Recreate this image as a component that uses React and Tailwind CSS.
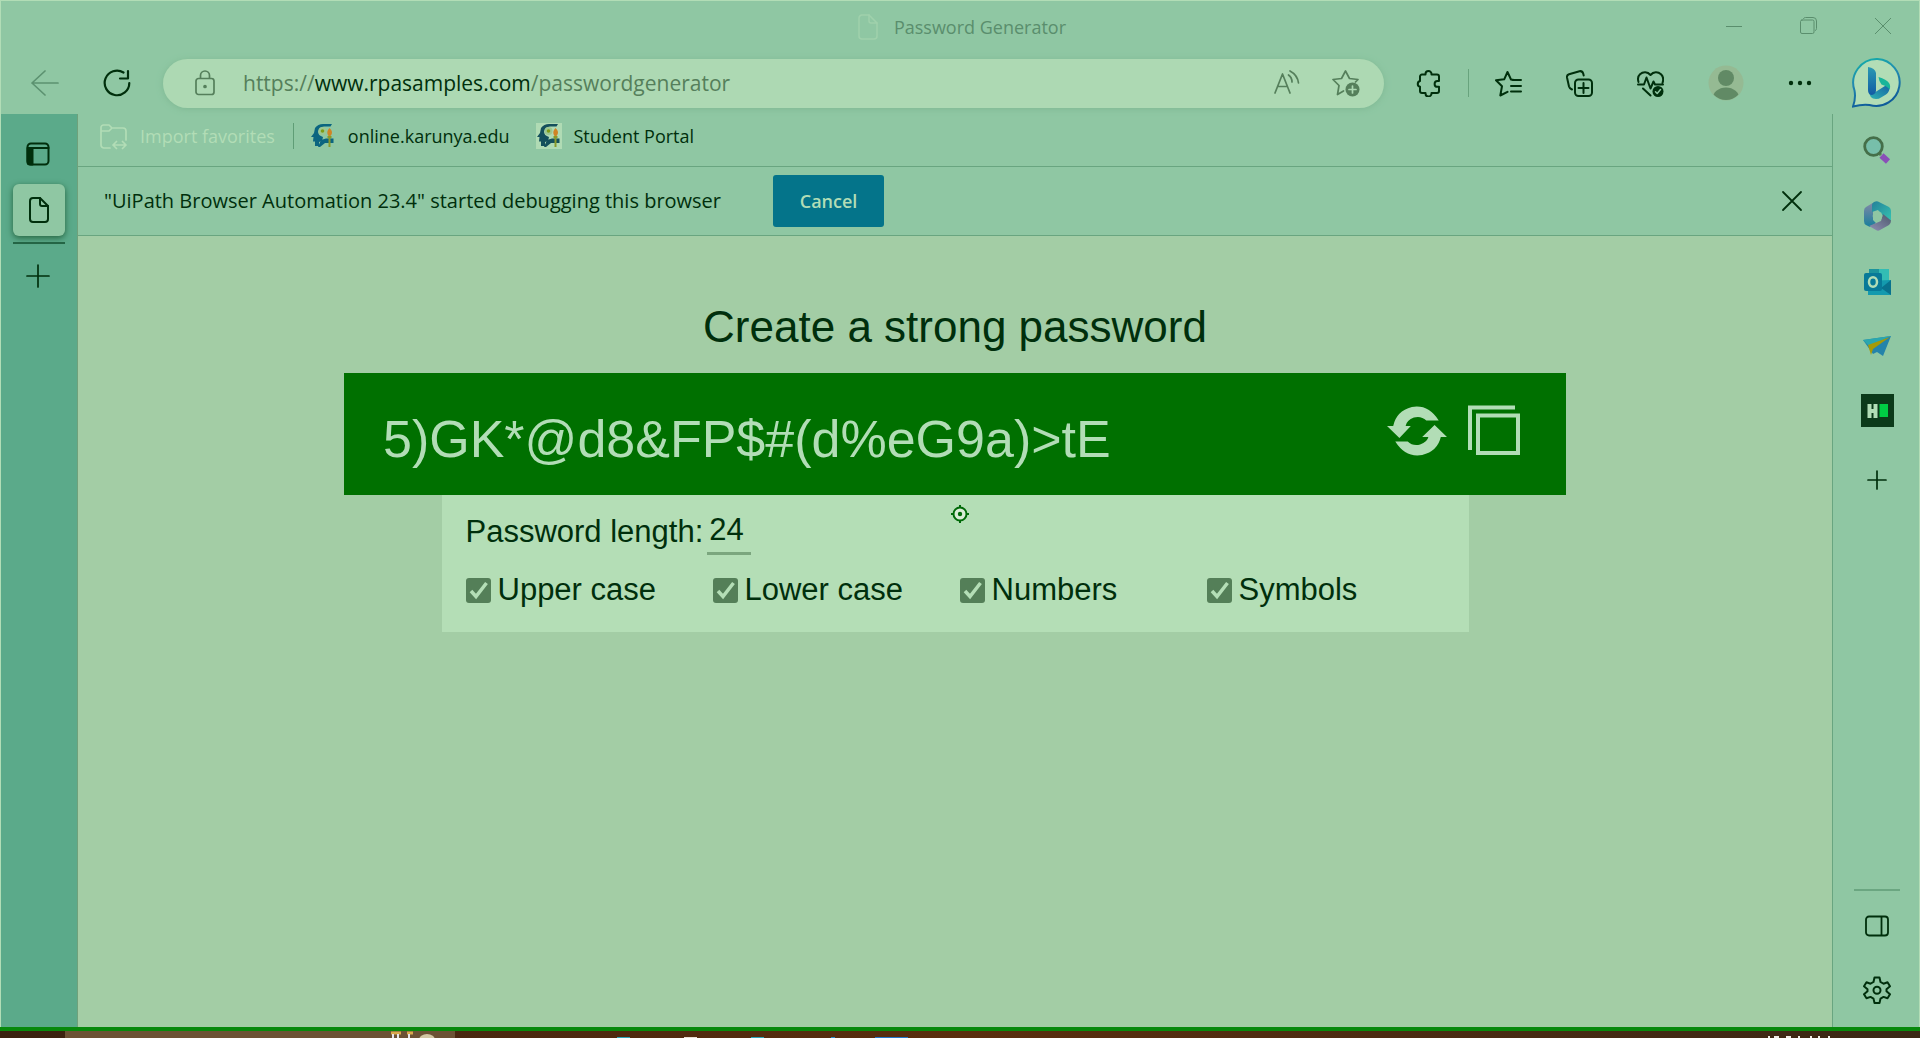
const ui = "font-['Open_Sans','Noto_Sans',sans-serif]";

function Svg({ className, vb = "0 0 24 24", children, sw = 1.5 }) {
  return (
    <svg className={className} viewBox={vb} fill="none" stroke="currentColor" strokeWidth={sw} strokeLinecap="round" strokeLinejoin="round" aria-hidden="true">
      {children}
    </svg>
  );
}

function PageIcon({ className, sw = 2 }) {
  return (
    <Svg className={className} vb="0 0 20 26" sw={sw}>
      <path d="M4 1h7l8 8v13a3 3 0 0 1-3 3H4a3 3 0 0 1-3-3V4a3 3 0 0 1 3-3z" />
      <path d="M11 1v6a2 2 0 0 0 2 2h6" />
    </Svg>
  );
}

function TitleBar() {
  return (
    <header className="flex h-[52px] items-start text-[#5a8e6d]">
      <div className="w-[210px]" />
      <div className="flex flex-1 items-center justify-center gap-4 pt-3 pl-[14px]">
        <PageIcon className="h-[26px] w-5 text-[#a0d1ac]" sw={1.5} />
        <h1 className="text-[18px] leading-7">Password Generator</h1>
      </div>
      <div className="flex w-[220px] justify-end gap-[58px] pt-4 pr-7">
        <button aria-label="Minimize"><Svg className="size-4" vb="0 0 16 16" sw={1}><path d="M0 8.5h16" /></Svg></button>
        <button aria-label="Restore"><Svg className="size-[17px]" vb="0 0 17 17" sw={1}><rect x=".5" y="3" width="13.5" height="13.5" rx="1.5" /><path d="M3.5 1.5Q4 .5 5.500 .5H13a3.500 3.500 0 0 1 3.500 3.500v7.500q0 1.500-1 2" /></Svg></button>
        <button aria-label="Close"><Svg className="size-4" vb="0 0 16 16" sw={1}><path d="M0 0l16 16M16 0L0 16" /></Svg></button>
      </div>
    </header>
  );
}

function BingLogo() {
  return (
    <svg className="size-[50px]" viewBox="0 0 50 50" aria-hidden="true">
      <defs>
        <linearGradient id="bo" x1="0" y1="0" x2=".3" y2="1"><stop offset="0" stopColor="#12b0a8" /><stop offset=".5" stopColor="#2389b0" /><stop offset="1" stopColor="#0f5c9a" /></linearGradient>
        <linearGradient id="bs" x1="0" y1="0" x2="0" y2="1"><stop offset="0" stopColor="#2b9ab2" /><stop offset="1" stopColor="#125ba4" /></linearGradient>
        <linearGradient id="bb" x1="0" y1="1" x2="1" y2="0"><stop offset="0" stopColor="#2cb3b2" /><stop offset="1" stopColor="#1763a4" /></linearGradient>
      </defs>
      <path d="M25.500 1a23.500 23.500 0 1 1-8 46q-7-1-16.500 1.500 3-8 1.500-16A23.800 23.800 0 0 1 25.500 1z" fill="#b2ddb6" stroke="url(#bo)" strokeWidth="2" />
      <path d="M17 32q0 9 7 9 3 0 5-1.500l5-3q4-3 3.500-8l-3-1.500-11 7z" fill="url(#bb)" />
      <path d="M26.500 19q8 2.500 10.500 6 2 3 .5 6.500-2-3-8-5-2.500-3-3-7.500z" fill="#18b59a" />
      <path d="M16 9q7 1 8 6v18q-1 4-5 4-3-1-3-5z" fill="url(#bs)" />
    </svg>
  );
}

const toolbarIcons = {
  puzzle: (
    <Svg className="h-[27px] w-6" vb="0 0 24 27" sw={2}>
      <path d="M6 4.500h3.500V4a3 3 0 0 1 6 0v.5H21a2 2 0 0 1 2 2V11h-1.500a2.900 2.900 0 0 0 0 5.800H23v4.200a2 2 0 0 1-2 2h-5.500v.5a3 3 0 0 1-6 0V23H6a2 2 0 0 1-2-2v-4.200a3 3 0 0 1 0-5.800V6.500a2 2 0 0 1 2-2z" />
    </Svg>
  ),
  favorites: (
    <Svg className="size-[27px]" vb="0 0 27 27" sw={2}>
      <path d="M16 9.500L12.500 2 9.200 9.300 1 10.300l6 6L5.300 25.500 12.500 21.800M16 9.500l2 .3M17 10h9M16 16h10M16 21.500h10" />
    </Svg>
  ),
  collections: (
    <Svg className="size-[27px]" vb="0 0 27 27" sw={2}>
      <rect x="9" y="9.500" width="17" height="16.500" rx="3.500" />
      <path d="M17.500 13v10M12.500 18h10M6 19.500q-2.500-1-3-3L1 7.500Q.6 5 3 4.200L13.500 1.200q2.800-.5 3.700 2.300l.5 2" />
    </Svg>
  ),
  health: (
    <Svg className="size-[27px]" vb="0 0 27 27" sw={2}>
      <path d="M1.500 12Q0 7 3 4.300C6 1.500 10.500 1.500 13.500 5c3-3.500 7.500-3.500 10.500-.7 3 2.700 2.500 5.700 1.500 8.700M1 14.500h6l2.500-7 4 11 3-7 1.500 3h8M6 18.500l7.500 7" />
      <circle cx="21" cy="21.500" r="5.500" fill="currentColor" stroke="none" />
      <path d="M18.500 21.800l1.700 1.700 3.300-4" stroke="#8fc7a3" strokeWidth="1.500" />
    </Svg>
  ),
};

function Toolbar() {
  return (
    <nav aria-label="Browser" className="mb-px flex h-[60px] items-center pl-[30px] text-[#002f0c]">
      <button aria-label="Back" className="text-[#5c9270]"><Svg className="size-7" vb="0 0 28 28" sw={1.700}><path d="M27 14H1M14 2L1 14l13 12" /></Svg></button>
      <button aria-label="Refresh" className="ml-11"><Svg className="size-7" vb="0 0 28 28" sw={2.200}><path d="M20.500 3.500A12.300 12.300 0 1 0 26.300 14M25 2v7.500h-8" /></Svg></button>
      <form className="ml-8 flex h-[49px] flex-1 items-center rounded-full bg-[#add9b3] pr-6 pl-8 text-[#557f5b] shadow-[0_1px_6px_#7fb893]" onSubmit={(e) => e.preventDefault()}>
        <Svg className="h-[26px] w-5 shrink-0" vb="0 0 20 26" sw={1.700}>
          <rect x="1" y="8.500" width="18" height="16" rx="2.500" /><path d="M5.500 8V5.500a4.500 4.500 0 0 1 9 0V8" /><circle cx="10" cy="16.500" r="1" fill="currentColor" />
        </Svg>
        <div role="textbox" aria-label="Address" contentEditable suppressContentEditableWarning className="ml-7 flex-1 text-[21px] leading-8 whitespace-nowrap outline-none">
          https://<span className="text-[#002f0c]">www.rpasamples.com</span>/passwordgenerator
        </div>
        <button aria-label="Read aloud" type="button"><Svg className="size-[26px]" vb="0 0 26 26" sw={1.700}><path d="M1 23L8.500 4l7.500 19M3.800 16.500h9.500M14.500 5q3.500 2.500 3.500 7M16 1q7.500 4 8.500 12" /></Svg></button>
        <button aria-label="Add to favorites" type="button" className="ml-8">
          <Svg className="size-7" vb="0 0 28 28" sw={1.700}>
            <path d="M11.500 22L5.500 25.500 7 16.500 1 10.500l8.500-1L13.500 2l4 7.500 8.500 1-2.500 2.500" />
            <circle cx="20.500" cy="20.500" r="7" fill="currentColor" stroke="none" /><path d="M20.500 17v7M17 20.500h7" stroke="#add9b3" />
          </Svg>
        </button>
      </form>
      <button aria-label="Extensions" className="ml-8">{toolbarIcons.puzzle}</button>
      <span className="ml-7 h-7 w-px bg-[#68a37d]" />
      <button aria-label="Favorites" className="ml-[26px]">{toolbarIcons.favorites}</button>
      <button aria-label="Collections" className="ml-11">{toolbarIcons.collections}</button>
      <button aria-label="Browser essentials" className="ml-11">{toolbarIcons.health}</button>
      <button aria-label="Profile" className="ml-11">
        <svg className="size-9" viewBox="0 0 36 36" aria-hidden="true">
          <clipPath id="av"><circle cx="18" cy="18" r="17" /></clipPath>
          <circle cx="18" cy="18" r="17.500" fill="#95ba93" />
          <g clipPath="url(#av)" fill="#618a65"><circle cx="18" cy="13" r="8" /><ellipse cx="18" cy="34" rx="13.500" ry="11.500" /></g>
        </svg>
      </button>
      <button aria-label="Settings and more" className="ml-11"><svg className="h-6 w-6" viewBox="0 0 24 24" fill="currentColor" aria-hidden="true"><circle cx="3" cy="12" r="2.200" /><circle cx="12" cy="12" r="2.200" /><circle cx="21" cy="12" r="2.200" /></svg></button>
      <button aria-label="Discover" className="mr-[17px] ml-10"><BingLogo /></button>
    </nav>
  );
}

function TabRail() {
  return (
    <aside className="flex w-[77px] flex-col items-center border-r border-[#6fa17b] bg-[#5baa8a] pr-3 pt-7 text-[#002f0c]">
      <button aria-label="Tab actions" className="pl-[10px]">
        <Svg className="size-6" sw={2}><rect x="1.500" y="1.500" width="21" height="21" rx="3.500" /><path d="M1.500 6h21" /><path d="M1.500 7h5v15.500H4a2.500 2.500 0 0 1-2.500-2.500z" fill="currentColor" /></Svg>
      </button>
      <button aria-label="Password Generator tab" className="mt-[18px] ml-3 flex h-[52px] w-[52px] items-center justify-center rounded-md bg-[#8fc7a3] shadow-[0_2px_6px_#25643f]">
        <PageIcon className="h-[26px] w-5" />
      </button>
      <span className="mt-1.5 ml-3 h-0.5 w-[52px] bg-[#246545]" />
      <button aria-label="New tab" className="mt-5 ml-2.5"><Svg className="size-6" sw={1.700}><path d="M12 1v22M1 12h22" /></Svg></button>
    </aside>
  );
}

function KarunyaIcon({ boxed }) {
  const ink = boxed ? "#14505c" : "#0b6580";
  return (
    <svg className={boxed ? "size-[26px] bg-[#b0dbb4]" : "size-[26px]"} viewBox="0 0 26 26" aria-hidden="true">
      <path d="M5 5q3-4 8-4h9l-1.500 2.500H14Q9 4 8 8.500q0 4 5 5.500l-1 4-3 1v4H5v-4.500H3L3.500 14H1l3-4z" fill={ink} />
      <circle cx="12.500" cy="8" r="4" fill="#9cc791" /><circle cx="12.500" cy="8" r="1.800" fill="#7f9d17" />
      <path d="M11 17l5-1.500h7.500V20H15l-5 4H8z" fill={ink} />
      <path d="M19.500 5q4.500 4 1 8h-2q-3-4 1-8z" fill="#d08425" /><path d="M17.500 13h4v2h-1v9h-2v-9h-1z" fill="#8a9a2a" />
    </svg>
  );
}

function FavoritesBar() {
  return (
    <nav aria-label="Favorites bar" className="flex h-[53px] items-center border-b border-[#69a580] pb-2 pl-[22px] text-[18px] leading-7 text-[#002f0c]">
      <button className="flex items-center gap-[13px] text-[#b2ddb6]">
        <Svg className="size-[27px]" vb="0 0 27 27" sw={1.700}><path d="M10 25H4a3 3 0 0 1-3-3V4.500A2.500 2.500 0 0 1 3.500 2H9l3 3h11a3 3 0 0 1 3 3v9M1 8h8l3-3M13 22h13M16.500 18.500L13 22l3.500 3.500M22.500 18.500L26 22l-3.500 3.500" /></Svg>
        Import favorites
      </button>
      <span className="ml-[18px] h-[26px] w-px bg-[#5f9d76]" />
      <a href="#karunya" className="ml-4 flex items-center gap-3"><KarunyaIcon />online.karunya.edu</a>
      <a href="#portal" className="ml-[26px] flex items-center gap-3"><KarunyaIcon boxed />Student Portal</a>
    </nav>
  );
}

function InfoBar() {
  return (
    <section className="flex h-[69px] items-center border-b border-[#69a580] pr-[27px] pl-[26px] text-[20px] leading-7 text-[#002f0c]">
      <p>&quot;UiPath Browser Automation 23.4&quot; started debugging this browser</p>
      <button className="ml-[52px] h-[52px] w-[111px] rounded-[3px] bg-[#04748a] text-[18px] font-semibold text-[#b2ddb6]">Cancel</button>
      <button aria-label="Dismiss" className="ml-auto"><Svg className="size-[26px]" vb="0 0 26 26" sw={1.800}><path d="M4 4l18 18M22 4L4 22" /></Svg></button>
    </section>
  );
}

function Check({ label }) {
  return (
    <label className="flex w-[247px] items-center gap-[7px]">
      <span className="relative flex size-[25px]">
        <input type="checkbox" defaultChecked className="size-full appearance-none rounded-[3px] bg-[#547f58]" />
        <svg className="pointer-events-none absolute inset-0 size-full" viewBox="0 0 25 25" fill="none" stroke="#b4deb6" strokeWidth="3.500" aria-hidden="true"><path d="M5 13l5 5.500L20.500 5" /></svg>
      </span>
      {label}
    </label>
  );
}

function Generator() {
  return (
    <main className="flex-1 bg-[#a3cda5] font-['Liberation_Sans',Arial,sans-serif] text-[#002f0c]">
      <h2 className="pt-[66px] text-center text-[44px] leading-[50px]">Create a strong password</h2>
      <div className="mx-auto mt-[21px] flex h-[122px] w-[70%] max-w-[1222px] items-start justify-between bg-[#007000] pr-[45px] pl-[39px] text-[#b2ddb6]">
        <output className="pt-9 text-[52px] leading-[60px]">{"5)GK*@d8&FP$#(d%eG9a)>tE"}</output>
        <div className="flex gap-[21px] pt-8">
          <button aria-label="Generate a new password">
            <svg className="h-[50px] w-[60px]" viewBox="0 0 58 50" preserveAspectRatio="none" fill="currentColor" aria-hidden="true">
              <path d="M0 20L6 20Q9 5 24 1 40-2 50 14.500H38Q33 9.500 26 11.500 19 14 18 20h5L12 32z" />
              <path d="M58 31L52 31Q49 45 34 49 18 52 8 35.500H20Q25 40.500 32 38.500 39 36 40 31H34L46 19z" />
            </svg>
          </button>
          <button aria-label="Copy password">
            <svg className="h-[51px] w-[53px]" viewBox="0 0 53 51" fill="none" stroke="currentColor" strokeWidth="4" aria-hidden="true"><path d="M47 2.500H2V45" /><rect x="10" y="10.500" width="40" height="37.500" /></svg>
          </button>
        </div>
      </div>
      <div className="relative mx-auto h-[137px] w-[59%] max-w-[1027px] bg-[#b4deb6] pt-[17px] pl-[24px] text-[31px] leading-10">
        <svg className="absolute top-[10px] left-1/2 -ml-1 size-[18px]" viewBox="0 0 18 18" fill="none" stroke="#006a08" strokeWidth="2" aria-hidden="true"><circle cx="9" cy="9" r="6.500" fill="#d8ecd6" /><path d="M9 0v3M9 15v3M0 9h3M15 9h3" /><circle cx="9" cy="9" r="2.200" fill="#006a08" stroke="none" /></svg>
        <div className="flex">
          <label htmlFor="len">Password length:</label>
          <input id="len" defaultValue="24" className="ml-1 h-[43px] w-11 border-b-[3px] border-[#7ba67e] bg-transparent pb-1 pl-0.5 outline-none" />
        </div>
        <div className="mt-[15px] flex">
          {["Upper case", "Lower case", "Numbers", "Symbols"].map((l) => <Check key={l} label={l} />)}
        </div>
      </div>
    </main>
  );
}

function AppRail() {
  return (
    <aside className="flex w-[87px] flex-col items-center border-l border-[#69a580] pt-[21px] pb-[23px] pl-0.5 text-[#002f0c]">
      <button aria-label="Search" className="mt-px">
        <svg className="size-7" viewBox="0 0 28 28" aria-hidden="true"><path d="M18.500 19.500l6.500 6" stroke="#8a4fb8" strokeWidth="6" /><path d="M15 16l3 3" stroke="#567f50" strokeWidth="3" /><circle cx="10.500" cy="10.500" r="8.800" fill="#77bfaa" stroke="#456f49" strokeWidth="2.800" /></svg>
      </button>
      <button aria-label="Microsoft 365" className="mt-[37px]">
        <svg className="size-[30px]" viewBox="0 0 30 30" aria-hidden="true">
          <defs>
            <linearGradient id="ma" x1="0" y1="0" x2="0" y2="1"><stop offset="0" stopColor="#8088a6" /><stop offset="1" stopColor="#187f9c" /></linearGradient>
            <linearGradient id="mb" x1="0" y1="0" x2="1" y2="1"><stop offset="0" stopColor="#23809a" /><stop offset="1" stopColor="#35c3b0" /></linearGradient>
            <linearGradient id="mc" x1="0" y1="1" x2="1" y2="0"><stop offset="0" stopColor="#8f8fb5" /><stop offset="1" stopColor="#4d5a6c" /></linearGradient>
          </defs>
          <path d="M9 3q1.500-1 2-1v17l3 3-6 4-4-2Q2 23 2 20V10q0-3 2-4z" fill="url(#ma)" />
          <path d="M10 11V4q0-2 2-3 3-1.500 5 0l10 5q2 1.500 2 4v10l-9-6-4-5z" fill="url(#mb)" />
          <path d="M29 19.500q0 3-2 4.500l-9 5q-2 1.500-4 0l-7-4 12-5 2-7z" fill="url(#mc)" />
          <circle cx="15.500" cy="15" r="4.800" fill="#8fc7a3" />
        </svg>
      </button>
      <button aria-label="Outlook" className="mt-[37px]">
        <svg className="size-7" viewBox="0 0 28 28" aria-hidden="true"><path d="M6 1h20v12H6z" fill="#33bdb4" /><path d="M6 1h10v12H6z" fill="#1c949c" /><path d="M5 13l23-1v15H5z" fill="#149aae" /><path d="M18 20l10-8v15z" fill="#09728d" /><rect x="1" y="5" width="18" height="18" rx="2" fill="#087a98" /><ellipse cx="10" cy="14" rx="4" ry="4.700" fill="none" stroke="#b2ddb6" strokeWidth="2.500" /></svg>
      </button>
      <button aria-label="Drop" className="mt-[37px]">
        <svg className="h-7 w-[30px]" viewBox="0 0 30 28" aria-hidden="true"><path d="M1 7l28-4L21 23l-6-4-4 2z" fill="#2484aa" /><path d="M1 7l28-4L7 13z" fill="#2aa7ae" /><path d="M6 12L28 4 11 16l-2 6z" fill="#a59a08" /></svg>
      </button>
      <button aria-label="HackerRank" className="mt-[33px] flex size-[33px] items-center justify-center bg-[#0c3a1a]">
        <svg className="h-[14px] w-[21px]" viewBox="0 0 21 14" aria-hidden="true"><path d="M2.500 0v14M8.500 0v14M2 7h7" stroke="#b2ddb6" strokeWidth="4" fill="none" /><path d="M12.500 0h8.500v13h-8.500z" fill="#00cc44" /></svg>
      </button>
      <button aria-label="Add app" className="mt-[43px]"><Svg className="size-5" vb="0 0 20 20" sw={1.700}><path d="M10 1v18M1 10h18" /></Svg></button>
      <span className="mt-auto h-0.5 w-[46px] bg-[#6ba681]" />
      <button aria-label="Hide sidebar" className="mt-[23px]"><Svg className="size-6" sw={1.800}><rect x="1" y="2.500" width="22" height="19" rx="3" /><path d="M16.500 3v18" /></Svg></button>
      <button aria-label="Settings" className="mt-[38px]">
        <Svg className="size-7" vb="0 0 28 28" sw={2}>
          <path d="M11.500 1.500h5l1 4.500 3 1.700 4-1.400 2.500 4-3.500 3v2l3.500 3-2.500 4-4-1.400-3 1.700-1 4.400h-5l-1-4.400-3-1.700-4 1.400-2.500-4 3.500-3v-2l-3.500-3 2.500-4 4 1.400 3-1.700z" /><circle cx="14" cy="14.300" r="3.500" />
        </Svg>
      </button>
    </aside>
  );
}

function Taskbar() {
  return (
    <footer className="flex h-[11px] items-stretch overflow-hidden border-t-4 border-[#07890c] bg-linear-to-r from-[#3a2110] via-[#5a2e0e] to-[#3a2715]">
      <span className="ml-[65px] flex w-[390px] justify-end bg-[#6c5235] pr-1">
        <svg className="h-full w-16" viewBox="0 0 64 7" aria-hidden="true"><path d="M4 2h10M20 2h6" stroke="#d8a94e" strokeWidth="3" /><path d="M6 3v4M11 3v4M22 3v4" stroke="#e6e6ee" strokeWidth="2" /><ellipse cx="40" cy="9" rx="8" ry="6" fill="#d2c7a4" /></svg>
      </span>
      <svg className="h-full flex-1" viewBox="0 0 1465 7" preserveAspectRatio="none" aria-hidden="true"><path d="M162 6.500h13M296 6.500h13" stroke="#2ba4b8" /><path d="M229 6.500h13" stroke="#e8dfd4" /><path d="M376 6.500h4" stroke="#2c86c0" /><path d="M420 6.500h33" stroke="#2276c8" /><path d="M1313 6h2M1319 6h5M1331 6h5M1343 6h2M1355 6h2M1363 6h2M1373 6h2" stroke="#f0ece6" strokeWidth="2" /></svg>
    </footer>
  );
}

export default function App() {
  return (
    <div className={`flex min-h-screen flex-col ${ui}`}>
      <div className="flex flex-1 flex-col border border-b-0 border-[#b2ddb6] bg-[#8fc7a3]">
        <TitleBar />
        <Toolbar />
        <div className="flex flex-1">
          <TabRail />
          <div className="flex min-w-0 flex-1 flex-col">
            <FavoritesBar />
            <InfoBar />
            <Generator />
          </div>
          <AppRail />
        </div>
      </div>
      <Taskbar />
    </div>
  );
}
